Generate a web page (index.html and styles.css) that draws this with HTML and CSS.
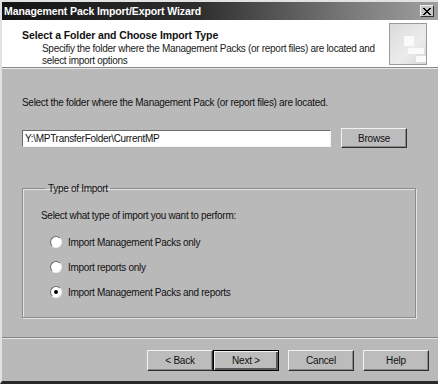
FILE: index.html
```html
<!DOCTYPE html>
<html lang="en">
<head>
  <meta charset="UTF-8" />
  <title>Management Pack Import/Export Wizard</title>
  <link rel="stylesheet" href="styles.css">
</head>
<body>
  <div class="window">
    <div class="titlebar">
      <span class="title">Management Pack Import/Export Wizard</span>
      <button class="close-btn">
        <svg width="8" height="7" viewBox="0 0 8 7">
          <path d="M0 0 L7 7 M1 0 L8 7 M7 0 L0 7 M8 0 L1 7" stroke="#000" stroke-width="1" />
        </svg>
      </button>
    </div>

    <div class="header">
      <div class="header-text">
        <div class="header-title">Select a Folder and Choose Import Type</div>
        <div class="header-sub">Specifiy the folder where the Management Packs (or report files) are located and select import options</div>
      </div>
      <div class="header-icon">
        <div class="tile t1"></div>
        <div class="tile t2"></div>
        <div class="tile t3"></div>
      </div>
    </div>

    <div class="content">
      <div class="folder-label">Select the folder where the Management Pack (or report files) are located.</div>
      <div class="folder-row">
        <input type="text" class="folder-input" value="Y:\MPTransferFolder\CurrentMP" />
        <button class="btn browse">Browse</button>
      </div>

      <fieldset class="group">
        <legend>Type of Import</legend>
        <div class="group-label">Select what type of import you want to perform:</div>
        <label class="radio"><span class="dot"></span>Import Management Packs only</label>
        <label class="radio"><span class="dot"></span>Import reports only</label>
        <label class="radio"><span class="dot checked"></span>Import Management Packs and reports</label>
      </fieldset>
    </div>

    <div class="footer">
      <button class="btn">&lt; Back</button>
      <button class="btn default">Next &gt;</button>
      <button class="btn gap">Cancel</button>
      <button class="btn gap">Help</button>
    </div>
  </div>
</body>
</html>
```

FILE: styles.css
```css
* {
  box-sizing: border-box;
  margin: 0;
  padding: 0;
  font-family: 'Liberation Sans', Arial, sans-serif;
}

body {
  background: #b9b9b9;
}

.window {
  width: 438px;
  height: 384px;
  background: #b9b9b9;
  border-left: 2px solid #e2e2e2;
  border-top: 2px solid #e2e2e2;
  border-bottom: 3px solid #2a2a2a;
  display: flex;
  flex-direction: column;
  font-size: 10px;
  letter-spacing: -0.3px;
  color: #111;
}

.titlebar {
  height: 18px;
  background: linear-gradient(to right, #141414, #2e2e2e 45%, #7a7a7a 80%, #a0a0a0);
  display: flex;
  align-items: center;
  justify-content: space-between;
  padding: 0 4px 0 2px;
}

.title {
  color: #fff;
  font-weight: bold;
  font-size: 10.5px;
  letter-spacing: -0.1px;
}

.close-btn {
  width: 14px;
  height: 12px;
  background: #c4c4c4;
  border: 1px solid;
  border-color: #f0f0f0 #303030 #303030 #f0f0f0;
  display: flex;
  align-items: center;
  justify-content: center;
}

.header {
  height: 48px;
  background: #fff;
  border-bottom: 1px solid #8a8a8a;
  box-shadow: 0 1px 0 #e6e6e6;
  display: flex;
  justify-content: space-between;
  padding: 2px 11px 0 20px;
}

.header-title {
  font-weight: bold;
  font-size: 10.5px;
  letter-spacing: -0.1px;
  margin-top: 7px;
}

.header-sub {
  width: 345px;
  margin: 2px 0 0 20px;
  line-height: 12px;
  color: #222;
}

.header-icon {
  width: 38px;
  height: 42px;
  margin-top: 1px;
  border: 1px solid #9a9a9a;
  background: linear-gradient(135deg, #dadada, #ececec 60%, #d6d6d6);
  position: relative;
}

.tile {
  position: absolute;
  background: #fafafa;
}

.t1 { left: 14px; top: 12px; width: 10px; height: 10px; }
.t2 { left: 18px; top: 24px; width: 16px; height: 6px; }
.t3 { left: 26px; top: 32px; width: 10px; height: 6px; }

.content {
  flex: 1;
  padding: 29px 21px 0 20px;
}

.folder-label {
  height: 14px;
}

.folder-row {
  display: flex;
  align-items: center;
  gap: 10px;
  margin-top: 17px;
}

.folder-input {
  width: 309px;
  height: 17px;
  border: 1px solid;
  border-color: #6a6a6a #f4f4f4 #f4f4f4 #6a6a6a;
  background: #fff;
  font-size: 10px;
  letter-spacing: -0.3px;
  padding: 0 2px;
  color: #111;
}

.btn {
  width: 66px;
  height: 21px;
  background: #bcbcbc;
  border: 1px solid;
  border-color: #f2f2f2 #2e2e2e #2e2e2e #f2f2f2;
  box-shadow: inset -1px -1px 0 #8a8a8a;
  font-size: 10px;
  letter-spacing: -0.2px;
  color: #111;
}

.browse {
  height: 20px;
}

.group {
  margin-top: 35px;
  height: 135px;
  width: 394px;
  border: 1px solid #8c8c8c;
  box-shadow: 1px 1px 0 #e4e4e4, inset 1px 1px 0 #e4e4e4;
  padding: 16px 0 0 18px;
}

.group legend {
  margin-left: 5px;
  padding: 0 2px;
}

.group-label {
  margin-bottom: 14px;
}

.radio {
  display: flex;
  align-items: center;
  gap: 6px;
  height: 14px;
  margin: 0 0 11px 9px;
}

.dot {
  width: 12px;
  height: 12px;
  border-radius: 50%;
  background: #fff;
  border: 1px solid;
  border-color: #6a6a6a #f2f2f2 #f2f2f2 #6a6a6a;
  display: flex;
  align-items: center;
  justify-content: center;
}

.dot.checked::after {
  content: "";
  width: 4px;
  height: 4px;
  border-radius: 50%;
  background: #000;
}

.footer {
  height: 44px;
  border-top: 1px solid #858585;
  box-shadow: inset 0 1px 0 #e4e4e4;
  display: flex;
  justify-content: flex-end;
  align-items: flex-start;
  padding: 12px 9px 0 0;
}

.btn.default {
  border: 1px solid #000;
  box-shadow: inset 1px 1px 0 #f2f2f2, inset -2px -2px 0 #5a5a5a;
}

.btn.gap {
  margin-left: 9px;
}
```
